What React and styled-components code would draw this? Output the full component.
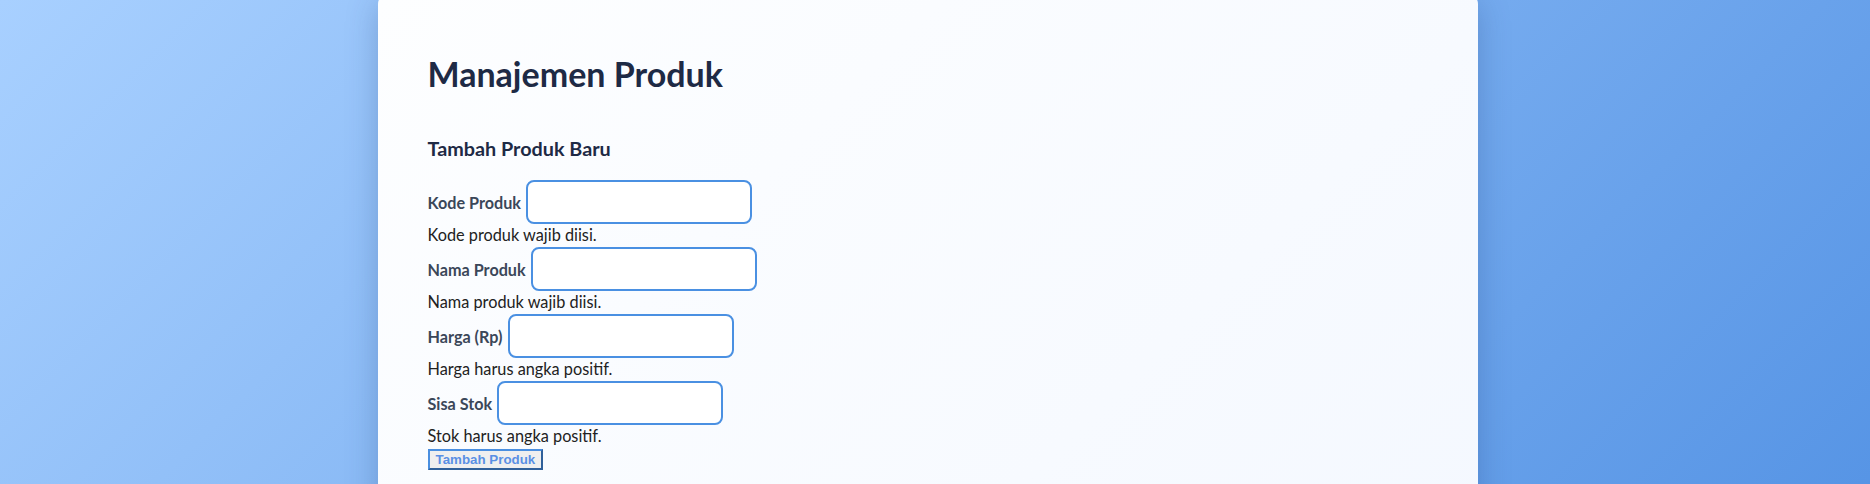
import React, { useState } from "react";
import styled, { createGlobalStyle } from "styled-components";

const GlobalStyle = createGlobalStyle`
  * {
    box-sizing: border-box;
  }
  html, body {
    margin: 0;
    padding: 0;
  }
  body {
    font-family: Lato, "Open Sans", sans-serif;
    background: linear-gradient(135deg, #a8d0ff 0%, #5392e4 100%);
    min-height: 100vh;
    overflow: hidden;
  }
`;

const fields = [
  { id: "kode", label: "Kode Produk", error: "Kode produk wajib diisi." },
  { id: "nama", label: "Nama Produk", error: "Nama produk wajib diisi." },
  { id: "harga", label: "Harga (Rp)", error: "Harga harus angka positif." },
  { id: "stok", label: "Sisa Stok", error: "Stok harus angka positif." },
];

const App = () => {
  const [form, setForm] = useState({ kode: "", nama: "", harga: "", stok: "" });

  const handleChange = (e) => {
    setForm({ ...form, [e.target.name]: e.target.value });
  };

  return (
    <>
      <GlobalStyle />
      <Page>
        <Card>
          <Title>Manajemen Produk</Title>
          <SubTitle>Tambah Produk Baru</SubTitle>
          <Form onSubmit={(e) => e.preventDefault()}>
            {fields.map((f) => (
              <FieldGroup key={f.id}>
                <FieldRow>
                  <Label htmlFor={f.id}>{f.label}</Label>
                  <Input
                    id={f.id}
                    name={f.id}
                    value={form[f.id]}
                    onChange={handleChange}
                  />
                </FieldRow>
                <ErrorText>{f.error}</ErrorText>
              </FieldGroup>
            ))}
            <SubmitButton type="submit">Tambah Produk</SubmitButton>
          </Form>
        </Card>
      </Page>
    </>
  );
};

const Page = styled.div`
  min-height: 100vh;
  display: flex;
  justify-content: center;
  align-items: flex-start;
  padding-right: 15px;
`;

const Card = styled.div`
  width: 1100px;
  min-height: 600px;
  margin-top: -6px;
  padding: 59px 48px 48px 50px;
  border-radius: 10px;
  background: linear-gradient(135deg, #fdfeff 0%, #f4f8ff 100%);
  box-shadow: 0 8px 32px rgba(28, 62, 120, 0.28);
`;

const Title = styled.h1`
  margin: 0;
  font-size: 34px;
  line-height: 42px;
  font-weight: 700;
  color: #1e2a45;
`;

const SubTitle = styled.h3`
  margin: 42px 0 20px;
  font-size: 19.8px;
  line-height: 23px;
  font-weight: 700;
  color: #1e2a45;
`;

const Form = styled.form`
  display: flex;
  flex-direction: column;
  align-items: flex-start;
`;

const FieldGroup = styled.div`
  display: flex;
  flex-direction: column;
  margin-bottom: 1px;
`;

const FieldRow = styled.div`
  display: flex;
  align-items: center;
  gap: 5px;
  height: 44px;
`;

const Label = styled.label`
  font-size: 16.2px;
  font-weight: 700;
  color: #3b4759;
`;

const Input = styled.input`
  width: 226px;
  height: 44px;
  padding: 10px;
  border: 2px solid #4a90e2;
  border-radius: 8px;
  background: #ffffff;
  font-size: 16px;
  font-family: inherit;
  outline: none;
`;

const ErrorText = styled.div`
  font-size: 16.3px;
  line-height: 22px;
  color: #222222;
`;

const SubmitButton = styled.button`
  margin-top: 1px;
  padding: 1px 6px;
  font-family: "Liberation Sans", Arial, sans-serif;
  font-size: 13.33px;
  font-weight: 700;
  line-height: 15px;
  color: #5a8fe4;
  background: #efefef;
  border-style: solid;
  border-width: 2px;
  border-color: #4a8fe0 #30609a #30609a #4a8fe0;
  cursor: pointer;
`;

export default App;
